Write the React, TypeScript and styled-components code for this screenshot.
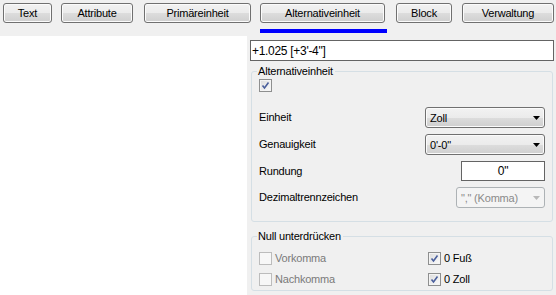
import React from "react"
import styled, { createGlobalStyle } from "styled-components"

const GlobalStyle = createGlobalStyle`
  html, body {
    margin: 0;
    padding: 0;
    background: #f0f0f0;
  }
  body {
    font-family: "Liberation Sans", Arial, sans-serif;
    font-size: 11px;
    color: #000;
  }
`;

// ページ全体
const Page = styled.div`
  width: 556px;
  height: 295px;
  overflow: hidden;
  background: #f0f0f0;
  letter-spacing: -0.2px;
`;

// タブ（ボタン列）
const Toolbar = styled.div`
  display: flex;
  align-items: flex-start;
  padding: 3px 0 0 3px;
`;

const TabItem = styled.div<{ $gap: number }>`
  display: flex;
  flex-direction: column;
  margin-left: ${(p) => p.$gap}px;
`;

const winButton = `
  border: 1px solid #707070;
  border-radius: 3px;
  background: linear-gradient(#f2f2f2 0%, #ebebeb 50%, #dddddd 50%, #cfcfcf 100%);
  box-shadow: inset 0 0 0 1px #fbfbfb;
`;

const TabButton = styled.div<{ $w: number }>`
  ${winButton}
  box-sizing: border-box;
  width: ${(p) => p.$w}px;
  height: 20px;
  display: flex;
  align-items: center;
  justify-content: center;
  line-height: 13px;
`;

const Indicator = styled.div<{ $on: boolean }>`
  height: 4px;
  margin-top: 6px;
  margin-right: -2px;
  background: ${(p) => (p.$on ? "#0000ff" : "transparent")};
`;

// メインエリア
const Main = styled.div`
  display: flex;
  margin-top: 3px;
  height: 259px;
`;

const WhitePanel = styled.div`
  width: 247px;
  background: #ffffff;
`;

const RightColumn = styled.div`
  width: 304px;
  margin-left: 3px;
  padding-top: 4px;
  display: flex;
  flex-direction: column;
`;

const ValueBox = styled.div`
  box-sizing: border-box;
  height: 21px;
  border: 1px solid #646464;
  background: #fff;
  padding-left: 1px;
  display: flex;
  align-items: center;
  font-size: 12px;
  letter-spacing: -0.3px;
`;

const Group = styled.fieldset<{ $top: number }>`
  margin: ${(p) => p.$top}px 1px 0 1px;
  padding: 0;
  border: 1px solid #d5dfe5;
  border-radius: 3px;
  min-inline-size: 0;
`;

const Legend = styled.legend`
  margin-left: 5px;
  padding: 0 2px 0 1px;
  line-height: 13px;
  height: 13px;
`;

const GroupBody = styled.div<{ $pt: number; $pb: number }>`
  padding: ${(p) => p.$pt}px 7px ${(p) => p.$pb}px 7px;
`;

const FormRows = styled.div`
  display: flex;
  flex-direction: column;
  gap: 6px;
  margin-top: 15px;
`;

const FormRow = styled.div<{ $h: number }>`
  display: flex;
  align-items: center;
  justify-content: space-between;
  height: ${(p) => p.$h}px;
`;

const Label = styled.span`
  line-height: 13px;
`;

const Combo = styled.div<{ $w: number; $disabled?: boolean }>`
  box-sizing: border-box;
  width: ${(p) => p.$w}px;
  height: 100%;
  display: flex;
  align-items: center;
  justify-content: space-between;
  padding: 0 4px 0 4px;
  ${(p) =>
    p.$disabled
      ? `
    border: 1px solid #adb2b5;
    border-radius: 3px;
    background: #f4f4f4;
    color: #8a8a8a;
  `
      : winButton}
`;

const TextBox = styled.div<{ $w: number }>`
  box-sizing: border-box;
  width: ${(p) => p.$w}px;
  height: 100%;
  border: 1px solid #646464;
  background: #fff;
  display: flex;
  align-items: center;
  justify-content: center;
  font-size: 12px;
`;

const CheckGrid = styled.div`
  display: grid;
  grid-template-columns: 169px 1fr;
  grid-auto-rows: 21px;
`;

const CheckItem = styled.label<{ $disabled?: boolean }>`
  display: flex;
  align-items: center;
  gap: 3px;
  color: ${(p) => (p.$disabled ? "#7a7a7a" : "#000")};
  line-height: 13px;
`;

const Box = styled.span<{ $disabled?: boolean }>`
  box-sizing: border-box;
  width: 13px;
  height: 13px;
  display: inline-flex;
  align-items: center;
  justify-content: center;
  border: 1px solid ${(p) => (p.$disabled ? "#bcbcbc" : "#8e8f8f")};
  background: ${(p) =>
    p.$disabled ? "#f7f7f7" : "linear-gradient(135deg, #dcdcdc, #fbfbfb)"};
  box-shadow: inset 0 0 0 1px ${(p) => (p.$disabled ? "#f7f7f7" : "#f4f4f4")};
`;

const Arrow = ({ color = "#000" }: { color?: string }) => (
  <svg width="7" height="4" viewBox="0 0 7 4">
    <polygon points="0,0 7,0 3.5,4" fill={color} />
  </svg>
);

const CheckBox = ({ checked, disabled }: { checked?: boolean; disabled?: boolean }) => (
  <Box $disabled={disabled}>
    {checked && (
      <svg width="9" height="9" viewBox="0 0 9 9">
        <path d="M1.5 4.5 L3.5 7 L7.5 1.5" stroke="#4a5f9c" strokeWidth="1.6" fill="none" />
      </svg>
    )}
  </Box>
);

const tabs = [
  { label: "Text", w: 49, gap: 0 },
  { label: "Attribute", w: 72, gap: 9 },
  { label: "Primäreinheit", w: 107, gap: 11 },
  { label: "Alternativeinheit", w: 125, gap: 9, active: true },
  { label: "Block", w: 56, gap: 11 },
  { label: "Verwaltung", w: 92, gap: 10 },
];

const App = () => (
  <Page>
    <GlobalStyle />
    <Toolbar>
      {tabs.map((t) => (
        <TabItem key={t.label} $gap={t.gap}>
          <TabButton $w={t.w}>{t.label}</TabButton>
          <Indicator $on={!!t.active} />
        </TabItem>
      ))}
    </Toolbar>
    <Main>
      <WhitePanel />
      <RightColumn>
        <ValueBox>+1.025 [+3'-4"]</ValueBox>

        <Group $top={4}>
          <Legend>Alternativeinheit</Legend>
          <GroupBody $pt={1} $pb={13}>
            <CheckBox checked />
            <FormRows>
              <FormRow $h={21}>
                <Label>Einheit</Label>
                <Combo $w={120}>
                  <span>Zoll</span>
                  <Arrow />
                </Combo>
              </FormRow>
              <FormRow $h={21}>
                <Label>Genauigkeit</Label>
                <Combo $w={120}>
                  <span>0'-0"</span>
                  <Arrow />
                </Combo>
              </FormRow>
              <FormRow $h={20}>
                <Label>Rundung</Label>
                <TextBox $w={84}>0"</TextBox>
              </FormRow>
              <FormRow $h={21}>
                <Label>Dezimaltrennzeichen</Label>
                <Combo $w={89} $disabled>
                  <span>"," (Komma)</span>
                  <Arrow color="#b8b8b8" />
                </Combo>
              </FormRow>
            </FormRows>
          </GroupBody>
        </Group>

        <Group $top={8}>
          <Legend>Null unterdrücken</Legend>
          <GroupBody $pt={5} $pb={0}>
            <CheckGrid>
              <CheckItem $disabled>
                <CheckBox disabled />
                Vorkomma
              </CheckItem>
              <CheckItem>
                <CheckBox checked />
                0 Fuß
              </CheckItem>
              <CheckItem $disabled>
                <CheckBox disabled />
                Nachkomma
              </CheckItem>
              <CheckItem>
                <CheckBox checked />
                0 Zoll
              </CheckItem>
            </CheckGrid>
          </GroupBody>
        </Group>
      </RightColumn>
    </Main>
  </Page>
);

export default App;
